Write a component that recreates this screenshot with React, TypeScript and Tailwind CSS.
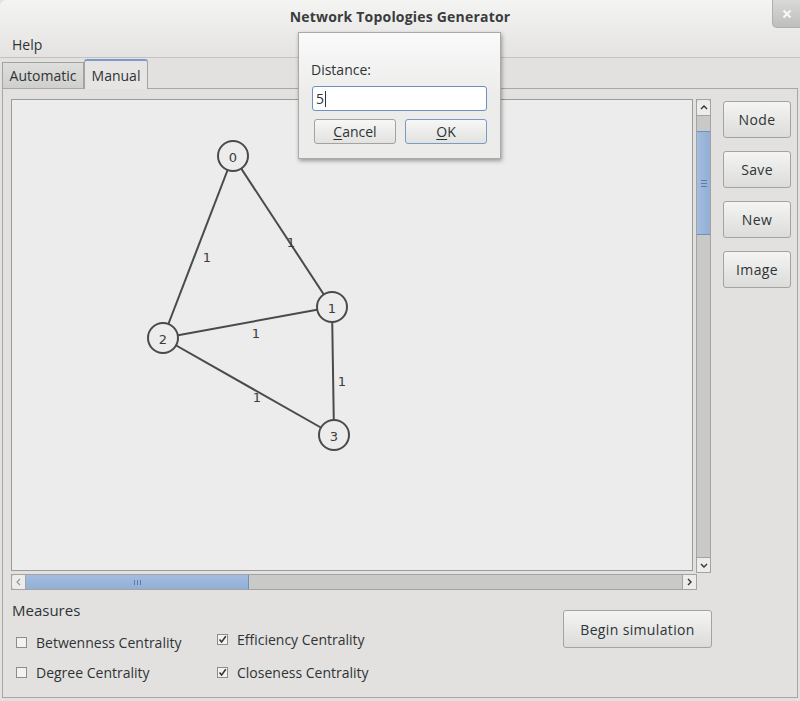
import React from 'react';

const nodes = [
  { id: '0', x: 221, y: 56 },
  { id: '1', x: 320, y: 207 },
  { id: '2', x: 151, y: 238 },
  { id: '3', x: 322, y: 335 },
];

const edges = [
  { a: 0, b: 2, lx: 195, ly: 157 },
  { a: 0, b: 1, lx: 279, ly: 142 },
  { a: 2, b: 1, lx: 244, ly: 233 },
  { a: 1, b: 3, lx: 330, ly: 281 },
  { a: 2, b: 3, lx: 245, ly: 297 },
];

const font = { fontFamily: '"Open Sans", "DejaVu Sans", sans-serif' };

function GraphCanvas() {
  return (
    <svg width="680" height="470" className="block">
      {edges.map((e, i) => {
        const p = nodes[e.a];
        const q = nodes[e.b];
        return <line key={i} x1={p.x} y1={p.y} x2={q.x} y2={q.y} stroke="#4a4a4a" strokeWidth="2" />;
      })}
      {edges.map((e, i) => (
        <text key={'l' + i} x={e.lx} y={e.ly} fontSize="13" fill="#3c3c3c" textAnchor="middle" dominantBaseline="central" fontFamily="DejaVu Sans, sans-serif">
          1
        </text>
      ))}
      {nodes.map((n) => (
        <g key={n.id}>
          <circle cx={n.x} cy={n.y} r="15" fill="#ececec" stroke="#4a4a4a" strokeWidth="2" />
          <text x={n.x} y={n.y + 1} fontSize="13" fill="#3c3c3c" textAnchor="middle" dominantBaseline="central" fontFamily="DejaVu Sans, sans-serif">
            {n.id}
          </text>
        </g>
      ))}
    </svg>
  );
}

function SideButton({ label }: { label: string }) {
  return (
    <button className="w-[68px] h-[37px] rounded-[3px] border border-[#a3a3a1] bg-gradient-to-b from-[#f4f4f3] to-[#dcdcda] text-[14px] text-[#2e3436] tracking-wide">
      {label}
    </button>
  );
}

function Check({ label, checked }: { label: string; checked?: boolean }) {
  return (
    <div className="flex items-center gap-[9px] h-[20px] text-[14px] text-[#2e3436]">
      <span className="w-[11px] h-[11px] border border-[#8d8d8b] bg-[#f2f2f1] flex items-center justify-center">
        {checked && (
          <svg width="9" height="9" viewBox="0 0 9 9">
            <path d="M1.5 4.5 L3.6 7 L7.8 1.2" fill="none" stroke="#2e3436" strokeWidth="1.5" />
          </svg>
        )}
      </span>
      <span>{label}</span>
    </div>
  );
}

export default function App() {
  return (
    <div className="relative w-[800px] h-[701px] bg-[#e2e1df] flex flex-col overflow-hidden" style={font}>
      {/* title + menu */}
      <div className="bg-gradient-to-b from-[#f4f4f3] to-[#e4e3e1] border-b border-[#c4c3c1] rounded-tl-[6px]">
        <div className="relative h-[32px] flex items-center justify-center">
          <span className="text-[14px] font-bold text-[#3a3c3d] tracking-[0.2px]">Network Topologies Generator</span>
          <div className="absolute right-0 top-0 w-[28px] h-[28px] rounded-bl-[5px] bg-gradient-to-b from-[#d9d9d8] to-[#bebebd] border-l border-b border-[#b0b0ae] flex items-center justify-center">
            <svg width="10" height="10" viewBox="0 0 10 10">
              <path d="M1.5 1.5 L8.5 8.5 M8.5 1.5 L1.5 8.5" stroke="#f7f7f7" strokeWidth="2.2" />
            </svg>
          </div>
        </div>
        <div className="h-[25px] flex items-center pl-[12px] text-[14px] text-[#2e3436]">Help</div>
      </div>

      {/* tabs */}
      <div className="h-[30px] flex items-end pl-[2px] pt-[2px]">
        <div className="h-[26px] w-[82px] border border-b-0 border-[#a2a2a0] bg-gradient-to-b from-[#dededc] to-[#cfcfcd] flex items-center justify-center text-[14px] text-[#2e3436]">
          Automatic
        </div>
        <div className="h-[30px] w-[64px] border border-b-0 border-[#a2a2a0] border-t-2 border-t-[#7c9bc9] rounded-t-[3px] bg-[#e6e5e3] flex items-center justify-center text-[14px] text-[#2e3436] -mb-px relative">
          Manual
        </div>
      </div>

      {/* panel */}
      <div className="flex-1 mx-[2px] mb-[3px] border border-[#a8a7a5] bg-[#e2e1df] pl-[8px] pt-[10px] flex flex-col">
        <div className="flex">
          <div className="flex flex-col w-[700px]">
            <div className="flex">
              <div className="w-[682px] h-[472px] border border-[#9b9b99] bg-[#ececec]">
                <GraphCanvas />
              </div>
              <div className="ml-[3px] w-[15px] h-[474px] flex flex-col bg-[#c9c9c7] border border-[#a3a3a1]">
                <div className="h-[16px] bg-[#ececec] border-b border-[#a3a3a1] rounded-t-[3px] flex items-center justify-center">
                  <svg width="8" height="5" viewBox="0 0 8 5"><path d="M1 4 L4 1 L7 4" fill="none" stroke="#333" strokeWidth="1.4" /></svg>
                </div>
                <div className="mt-[15px] h-[104px] bg-gradient-to-r from-[#a3bde0] to-[#93afd6] border-y border-[#6f8fbd] flex items-center justify-center">
                  <div className="flex flex-col gap-[2px]">
                    <span className="block w-[6px] h-px bg-[#5c7aa6]" />
                    <span className="block w-[6px] h-px bg-[#5c7aa6]" />
                    <span className="block w-[6px] h-px bg-[#5c7aa6]" />
                  </div>
                </div>
                <div className="flex-1" />
                <div className="h-[15px] bg-[#ececec] border-t border-[#a3a3a1] flex items-center justify-center">
                  <svg width="8" height="5" viewBox="0 0 8 5"><path d="M1 1 L4 4 L7 1" fill="none" stroke="#333" strokeWidth="1.4" /></svg>
                </div>
              </div>
            </div>
            <div className="mt-[1px] w-[686px] h-[16px] flex bg-[#c9c9c7] border border-[#a3a3a1]">
              <div className="w-[14px] bg-[#ececec] border-r border-[#a3a3a1] rounded-l-[3px] flex items-center justify-center">
                <svg width="5" height="8" viewBox="0 0 5 8"><path d="M4 1 L1 4 L4 7" fill="none" stroke="#9a9a9a" strokeWidth="1.2" /></svg>
              </div>
              <div className="w-[223px] bg-gradient-to-b from-[#a3bde0] to-[#93afd6] border-r border-[#6f8fbd] flex items-center justify-center">
                <div className="flex gap-[2px]">
                  <span className="block w-px h-[5px] bg-[#5c7aa6]" />
                  <span className="block w-px h-[5px] bg-[#5c7aa6]" />
                  <span className="block w-px h-[5px] bg-[#5c7aa6]" />
                </div>
              </div>
              <div className="flex-1" />
              <div className="w-[14px] bg-[#ececec] border-l border-[#a3a3a1] flex items-center justify-center">
                <svg width="5" height="8" viewBox="0 0 5 8"><path d="M1 1 L4 4 L1 7" fill="none" stroke="#333" strokeWidth="1.4" /></svg>
              </div>
            </div>
          </div>
          <div className="ml-[12px] pt-[2px] flex flex-col gap-[13px]">
            <SideButton label="Node" />
            <SideButton label="Save" />
            <SideButton label="New" />
            <SideButton label="Image" />
          </div>
        </div>

        {/* measures */}
        <div className="flex mt-[10px]">
          <div className="w-[552px] pl-[1px]">
            <div className="text-[15px] text-[#2e3436] leading-[20px]">Measures</div>
            <div className="mt-[12px] flex pl-[4px]">
              <div className="w-[201px] flex flex-col gap-[10px]">
                <Check label="Betwenness Centrality" />
                <Check label="Degree Centrality" />
              </div>
              <div className="flex flex-col gap-[10px] -mt-[3px]">
                <Check label="Efficiency Centrality" checked />
                <div className="mt-[3px]"><Check label="Closeness Centrality" checked /></div>
              </div>
            </div>
          </div>
          <div className="pt-[10px]">
            <button className="w-[149px] h-[38px] rounded-[3px] border border-[#a3a3a1] bg-gradient-to-b from-[#f4f4f3] to-[#dcdcda] text-[14px] text-[#2e3436] tracking-wide">
              Begin simulation
            </button>
          </div>
        </div>
      </div>

      {/* dialog */}
      <div className="absolute left-[298px] top-[32px] w-[203px] h-[127px] bg-gradient-to-b from-[#fafafa] via-[#ececeb] to-[#ececeb] border border-[#a9a9a7] shadow-[1px_2px_4px_rgba(0,0,0,0.35)] px-[12px]">
        <div className="mt-[27px] text-[14px] text-[#2e3436] leading-[20px]">Distance:</div>
        <div className="mt-[6px] ml-[1px] w-[175px] h-[25px] bg-white border border-[#6f8fbd] rounded-[3px] flex items-center pl-[3px] text-[14px] text-[#2e3436]">
          5<span className="inline-block w-px h-[16px] bg-[#2e3436] ml-px" />
        </div>
        <div className="mt-[8px] ml-[3px] flex gap-[9px]">
          <button className="w-[82px] h-[25px] rounded-[3px] border border-[#a3a3a1] bg-gradient-to-b from-[#f7f7f6] to-[#e2e2e0] text-[14px] text-[#2e3436]">
            <span className="underline underline-offset-2">C</span>ancel
          </button>
          <button className="w-[82px] h-[25px] rounded-[3px] border border-[#7d9ac4] bg-gradient-to-b from-[#f7f7f6] to-[#e2e2e0] text-[14px] text-[#2e3436]">
            <span className="underline underline-offset-2">O</span>K
          </button>
        </div>
      </div>
    </div>
  );
}
